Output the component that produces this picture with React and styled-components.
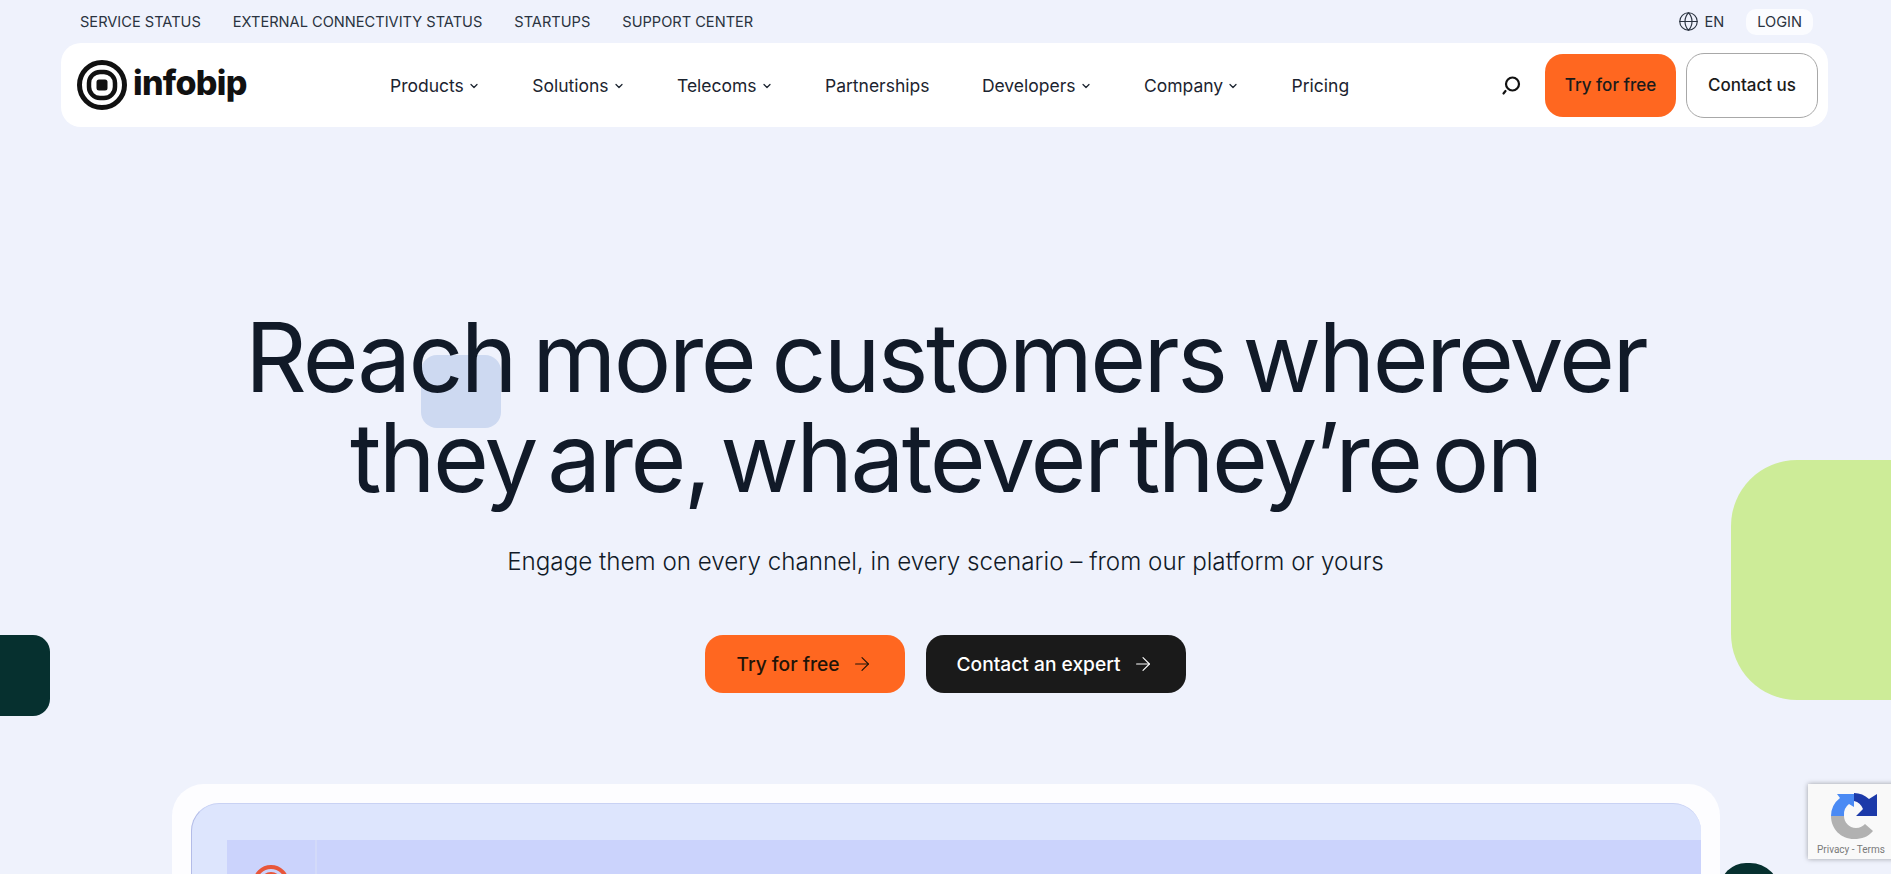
import React from "react";
import styled, { createGlobalStyle } from "styled-components";
import { ChevronDown, ArrowRight, Globe } from "lucide-react";

const GlobalStyle = createGlobalStyle`
  html, body {
    margin: 0;
    padding: 0;
    background: #eff2fc;
    font-family: "Inter", "Liberation Sans", sans-serif;
    color: #111a28;
  }
  * { box-sizing: border-box; }
`;

const Page = styled.div`
  position: relative;
  width: 100%;
  height: 874px;
  overflow: hidden;
  background: #eff2fc;
`;

const TopBar = styled.div`
  display: flex;
  align-items: center;
  justify-content: space-between;
  height: 43px;
  padding: 0 78px 0 80px;
`;

const TopLinks = styled.div`
  display: flex;
  gap: 32px;
`;

const TopLink = styled.a`
  font-size: 14.6px;
  line-height: 20px;
  color: #2a3340;
  text-transform: uppercase;
`;

const TopRight = styled.div`
  display: flex;
  align-items: center;
  gap: 22px;
`;

const Lang = styled.div`
  display: flex;
  align-items: center;
  gap: 5px;
  font-size: 14.6px;
  color: #2a3340;
`;

const Login = styled.a`
  display: flex;
  align-items: center;
  height: 26px;
  padding: 0 11px;
  border-radius: 10px;
  background: #fbfcff;
  font-size: 14.6px;
  color: #2a3340;
`;

const NavBar = styled.nav`
  display: flex;
  align-items: center;
  height: 84px;
  margin: 0 63px 0 61px;
  padding: 0 10px 0 16px;
  background: #fff;
  border-radius: 20px;
`;

const LogoLink = styled.a`
  display: flex;
  align-items: center;
  gap: 6px;
  width: 313px;
`;

const LogoWord = styled.span`
  font-size: 34px;
  font-weight: 800;
  letter-spacing: -0.7px;
  color: #111;
  line-height: 1;
  padding-bottom: 4px;
`;

const NavItems = styled.div`
  display: flex;
  flex: 1;
  gap: 52.4px;
  padding-top: 1px;
`;

const NavItem = styled.a`
  display: flex;
  align-items: center;
  gap: 4px;
  font-size: 17.5px;
  color: #1c2430;
`;

const NavActions = styled.div`
  display: flex;
  align-items: center;
  gap: 10px;
`;

const SearchButton = styled.button`
  display: flex;
  border: 0;
  padding: 0;
  margin-right: 14px;
  background: none;
`;

const NavButton = styled.a`
  display: flex;
  align-items: center;
  justify-content: center;
  width: ${(p) => (p.$outline ? "132px" : "131px")};
  height: ${(p) => (p.$outline ? "65px" : "63px")};
  border-radius: 18px;
  font-size: 17px;
  font-weight: 500;
  color: #1b1b1b;
  background: ${(p) => (p.$outline ? "#fff" : "#ff6720")};
  border: ${(p) => (p.$outline ? "1px solid #a8a8a8" : "0")};
`;

const Hero = styled.section`
  display: flex;
  flex-direction: column;
  align-items: center;
  padding-top: 180px;
`;

const Title = styled.h1`
  position: relative;
  margin: 0;
  font-size: 96px;
  font-weight: 400;
  line-height: 100px;
  letter-spacing: -2.6px;
  text-align: center;
  color: #111a28;
`;

const TitleLine = styled.span`
  display: block;
  word-spacing: ${(p) => p.$wordGap}px;
`;

const Sub = styled.p`
  margin: 38px 0 0;
  font-size: 24.2px;
  font-weight: 300;
  line-height: 34px;
  color: #111a28;
`;

const HeroActions = styled.div`
  display: flex;
  gap: 21px;
  margin-top: 56px;
`;

const HeroButton = styled.a`
  display: flex;
  align-items: center;
  gap: 11px;
  height: 58px;
  padding: 0 32px 0 31px;
  border-radius: 18px;
  font-size: 19.2px;
  font-weight: 500;
  background: ${(p) => (p.$dark ? "#1a1a1a" : "#ff6720")};
  color: ${(p) => (p.$dark ? "#fff" : "#1f1408")};
`;

const Shape = styled.div`
  position: absolute;
  top: ${(p) => p.$top}px;
  left: ${(p) => p.$left}px;
  width: ${(p) => p.$w}px;
  height: ${(p) => p.$h}px;
  background: ${(p) => p.$color};
  border-radius: ${(p) => p.$r};
`;

const Content = styled.div`
  position: relative;
  z-index: 1;
`;

const Card = styled.div`
  width: 1548px;
  margin: 91px auto 0;
  padding: 19px 19px 0;
  height: 200px;
  background: #fdfdff;
  border-radius: 32px 32px 0 0;
`;

const CardInner = styled.div`
  height: 100%;
  padding: 36px 0 0 35px;
  background: #dde5fd;
  border-radius: 28px 28px 0 0;
  border-top: 1px solid #c9d2f4;
  border-left: 1px solid #b3bce8;
`;

const CardPanel = styled.div`
  display: flex;
  height: 100%;
  background: #cbd3fc;
`;

const CardSidebar = styled.div`
  display: flex;
  justify-content: center;
  width: 90px;
  padding-top: 24px;
  border-right: 2px solid #d3daf9;
`;

const Recaptcha = styled.div`
  position: absolute;
  top: 784px;
  left: 1808px;
  width: 90px;
  height: 75px;
  padding: 8px 0 0 9px;
  background: #f9f9f9;
  box-shadow: 0 0 5px rgba(0, 0, 0, 0.35);
  z-index: 3;
`;

const RecaptchaIcon = styled.svg`
  display: block;
  margin-left: 13px;
`;

const RecaptchaLabel = styled.div`
  margin-top: 4px;
  font-family: "Roboto", "Liberation Sans", sans-serif;
  font-size: 10px;
  line-height: 12px;
  color: #7a7a7a;
  white-space: nowrap;
`;

const LogoMark = () => (
  <svg width="50" height="50" viewBox="0 0 50 50">
    <circle cx="25" cy="25" r="22.5" fill="none" stroke="#111" strokeWidth="5" />
    <rect x="12" y="12" width="26" height="26" rx="11" fill="none" stroke="#111" strokeWidth="4.5" />
    <rect x="19.5" y="19.5" width="11" height="11" rx="2.5" fill="#111" />
  </svg>
);

const SearchIcon = () => (
  <svg width="22" height="22" viewBox="0 0 22 22" fill="none" stroke="#111" strokeLinecap="round">
    <circle cx="13.5" cy="10" r="6.5" strokeWidth="2.2" />
    <path d="M6.5 17 L4.5 19.5" strokeWidth="2.2" />
  </svg>
);

const RecaptchaMark = () => (
  <RecaptchaIcon width="48" height="48" viewBox="0 0 48 48">
    <path d="M1 24a23 23 0 0 1 9-18l-3-4h17v13l-5-3a13 13 0 0 0-5 12z" fill="#4a8af4" />
    <path d="M24 1a23 23 0 0 1 15 6l8-5v22H26l7-7a13 13 0 0 0-9-8z" fill="#1c3aa9" />
    <path d="M1 24h13c0 6 5 12 12 12 4 0 7-2 9-4l8 7c-5 6-11 8-19 8C11 47 1 37 1 24z" fill="#b1b1b1" />
  </RecaptchaIcon>
);

const RedMark = () => (
  <svg width="38" height="38" viewBox="0 0 38 38" fill="none" stroke="#e8563a" strokeWidth="4">
    <circle cx="19" cy="19" r="16" />
    <circle cx="19" cy="19" r="9" />
  </svg>
);

const topLinks = ["Service status", "External connectivity status", "Startups", "Support center"];

const navItems = [
  { label: "Products", menu: true },
  { label: "Solutions", menu: true },
  { label: "Telecoms", menu: true },
  { label: "Partnerships" },
  { label: "Developers", menu: true },
  { label: "Company", menu: true },
  { label: "Pricing" },
];

const App = () => {
  return (
    <Page>
      <GlobalStyle />
      <Shape $top={355} $left={421} $w={80} $h={73} $color="#cdd9f1" $r="16px" />
      <Shape $top={460} $left={1731} $w={260} $h={240} $color="#cdec98" $r="66px" />
      <Shape $top={635} $left={-40} $w={90} $h={81} $color="#06302f" $r="17px" />
      <Shape $top={863} $left={1720} $w={60} $h={60} $color="#06302f" $r="26px 30px 0 0" />
      <Content>
        <TopBar>
          <TopLinks>
            {topLinks.map((link) => (
              <TopLink key={link}>{link}</TopLink>
            ))}
          </TopLinks>
          <TopRight>
            <Lang>
              <Globe size={21} strokeWidth={1.3} />
              EN
            </Lang>
            <Login>LOGIN</Login>
          </TopRight>
        </TopBar>
        <NavBar>
          <LogoLink>
            <LogoMark />
            <LogoWord>infobip</LogoWord>
          </LogoLink>
          <NavItems>
            {navItems.map((item) => (
              <NavItem key={item.label}>
                {item.label}
                {item.menu && <ChevronDown size={12} strokeWidth={2.5} />}
              </NavItem>
            ))}
          </NavItems>
          <NavActions>
            <SearchButton>
              <SearchIcon />
            </SearchButton>
            <NavButton>Try for free</NavButton>
            <NavButton $outline>Contact us</NavButton>
          </NavActions>
        </NavBar>
        <Hero>
          <Title>
            <TitleLine $wordGap={-7}>Reach more customers wherever</TitleLine>
            <TitleLine $wordGap={-13}>they are, whatever they’re on</TitleLine>
          </Title>
          <Sub>Engage them on every channel, in every scenario – from our platform or yours</Sub>
          <HeroActions>
            <HeroButton>
              Try for free
              <ArrowRight size={22} strokeWidth={1.2} />
            </HeroButton>
            <HeroButton $dark>
              Contact an expert
              <ArrowRight size={22} strokeWidth={1.2} />
            </HeroButton>
          </HeroActions>
        </Hero>
        <Card>
          <CardInner>
            <CardPanel>
              <CardSidebar>
                <RedMark />
              </CardSidebar>
            </CardPanel>
          </CardInner>
        </Card>
      </Content>
      <Recaptcha>
        <RecaptchaMark />
        <RecaptchaLabel>Privacy - Terms</RecaptchaLabel>
      </Recaptcha>
    </Page>
  );
};

export default App;
